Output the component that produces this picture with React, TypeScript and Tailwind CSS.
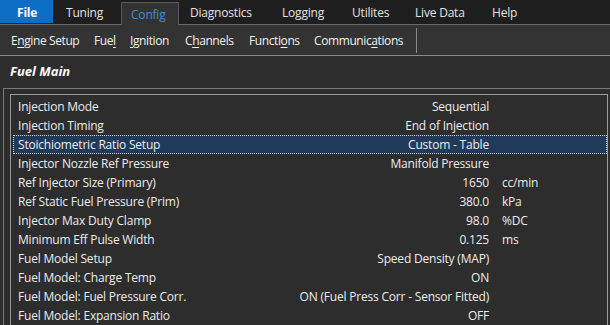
import React from 'react';

// ── Data ──────────────────────────────────────────────
const TABS = [
  { name: 'File', w: 'w-[53px]', pl: 'pl-[17px]' },
  { name: 'Tuning', w: 'w-[68px]', pl: 'pl-[13px]' },
  { name: 'Config', w: 'w-[58px]', pl: 'pl-[9px]' },
  { name: 'Diagnostics', w: 'w-[92px]', pl: 'pl-[11px]' },
  { name: 'Logging', w: 'w-[70px]', pl: 'pl-[11px]' },
  { name: 'Utilites', w: 'w-[63px]', pl: 'pl-[11px]' },
  { name: 'Live Data', w: 'w-[77px]', pl: 'pl-[11px]' },
  { name: 'Help', w: 'w-[60px]', pl: 'pl-[11px]' },
];

// [before, underlined, after, width class]
const RIBBON: [string, string, string, string][] = [
  ['E', 'n', 'gine Setup', 'w-[83px]'],
  ['Fue', 'l', '', 'w-[36px]'],
  ['', 'I', 'gnition', 'w-[55px]'],
  ['C', 'h', 'annels', 'w-[64px]'],
  ['Functi', 'o', 'ns', 'w-[65px]'],
  ['Communic', 'a', 'tions', 'w-[102px]'],
];

const ROWS = [
  { label: 'Injection Mode', value: 'Sequential' },
  { label: 'Injection Timing', value: 'End of Injection' },
  { label: 'Stoichiometric Ratio Setup', value: 'Custom - Table', selected: true },
  { label: 'Injector Nozzle Ref Pressure', value: 'Manifold Pressure' },
  { label: 'Ref Injector Size (Primary)', value: '1650', unit: 'cc/min' },
  { label: 'Ref Static Fuel Pressure (Prim)', value: '380.0', unit: 'kPa' },
  { label: 'Injector Max Duty Clamp', value: '98.0', unit: '%DC' },
  { label: 'Minimum Eff Pulse Width', value: '0.125', unit: 'ms' },
  { label: 'Fuel Model Setup', value: 'Speed Density (MAP)' },
  { label: 'Fuel Model: Charge Temp', value: 'ON' },
  { label: 'Fuel Model: Fuel Pressure Corr.', value: 'ON (Fuel Press Corr - Sensor Fitted)' },
  { label: 'Fuel Model: Expansion Ratio', value: 'OFF' },
];

export default function App() {
  return (
    <div
      className="w-[610px] h-[325px] overflow-hidden bg-[#2d2d2d] text-[12px] tracking-[-0.2px] text-[#ececec] flex flex-col"
      style={{ fontFamily: '"Segoe UI", "Open Sans", "Noto Sans", sans-serif' }}
    >
      {/* ── Top tabs ─────────────────────────────── */}
      <div className="h-[25px] bg-[#1e1e1e] flex items-stretch border-b border-[#6a6a6a] shrink-0">
        {TABS.map((t) => {
          if (t.name === 'File') {
            return (
              <div key={t.name} className={`${t.w} ${t.pl} h-[23px] pt-[3px] bg-[#0d6ec6] font-bold text-white flex items-center`}>
                {t.name}
              </div>
            );
          }
          if (t.name === 'Config') {
            return (
              <div
                key={t.name}
                className={`${t.w} ${t.pl} mt-[2px] -mb-px pt-px bg-[#333333] border border-b-0 border-[#5a5a5a] text-[#3d8fd9] flex items-center`}
              >
                {t.name}
              </div>
            );
          }
          return (
            <div key={t.name} className={`${t.w} ${t.pl} pt-[2px] flex items-center text-[#e2e2e2]`}>
              {t.name}
            </div>
          );
        })}
      </div>

      {/* ── Ribbon ───────────────────────────────── */}
      <div className="h-[31px] bg-[#333333] border-b border-[#8a8a8a] flex items-center pl-[11px] pt-px shrink-0">
        {RIBBON.map(([a, u, b, w], i) => (
          <span key={i} className={`${w} tracking-[-0.4px] text-[#f0f0f0] whitespace-nowrap`}>
            {a}
            <u className="underline-offset-[2px]">{u}</u>
            {b}
          </span>
        ))}
        <div className="w-px h-[25px] bg-[#8a8a8a]" />
      </div>

      {/* ── Header ───────────────────────────────── */}
      <div className="h-[32px] flex items-center pl-[10px] font-bold italic text-[13px] tracking-normal text-white shrink-0">
        Fuel Main
      </div>

      {/* ── Panel ────────────────────────────────── */}
      <div className="flex-1 ml-[3px] pl-[6px] pt-[5px] border-l border-t border-[#7a7a7a]">
        <div className="h-full mr-[2px] border-l border-t border-r border-[#9a9a9a] pt-[2px] pl-[2px]">
          {ROWS.map((r) => (
            <div
              key={r.label}
              className={`h-[19px] flex items-center ${
                r.selected ? 'bg-[#213a59] outline-1 outline-dotted outline-[#c9d3e0] -outline-offset-1' : ''
              }`}
            >
              <div className="w-[476px] flex justify-between pl-[5px] whitespace-nowrap">
                <span>{r.label}</span>
                <span>{r.value}</span>
              </div>
              <span className="pl-[13px]">{r.unit ?? ''}</span>
            </div>
          ))}
        </div>
      </div>
    </div>
  );
}
